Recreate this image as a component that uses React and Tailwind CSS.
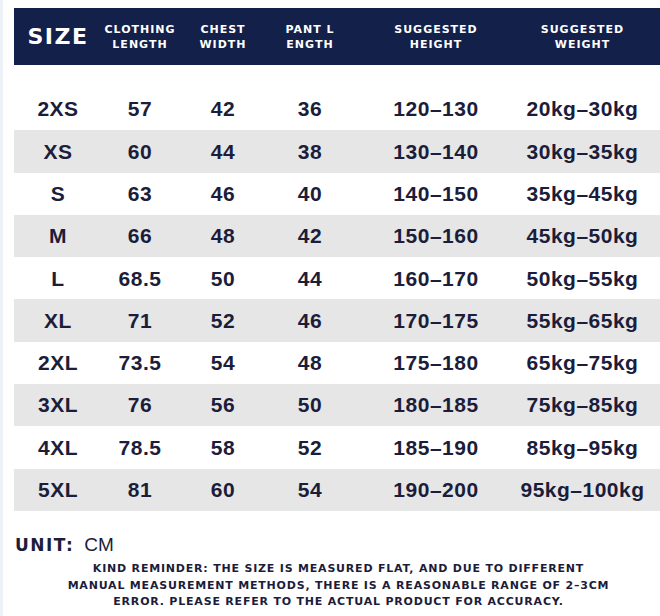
import React from 'react';

const rows = [
  ['2XS', '57', '42', '36', '120–130', '20kg–30kg'],
  ['XS', '60', '44', '38', '130–140', '30kg–35kg'],
  ['S', '63', '46', '40', '140–150', '35kg–45kg'],
  ['M', '66', '48', '42', '150–160', '45kg–50kg'],
  ['L', '68.5', '50', '44', '160–170', '50kg–55kg'],
  ['XL', '71', '52', '46', '170–175', '55kg–65kg'],
  ['2XL', '73.5', '54', '48', '175–180', '65kg–75kg'],
  ['3XL', '76', '56', '50', '180–185', '75kg–85kg'],
  ['4XL', '78.5', '58', '52', '185–190', '85kg–95kg'],
  ['5XL', '81', '60', '54', '190–200', '95kg–100kg'],
];

const headers = [
  ['CLOTHING', 'LENGTH'],
  ['CHEST', 'WIDTH'],
  ['PANT L', 'ENGTH'],
  ['SUGGESTED', 'HEIGHT'],
  ['SUGGESTED', 'WEIGHT'],
];

const cols = 'grid grid-cols-[88px_76px_90px_84px_168px_125px]';

export default function App() {
  return (
    <div className="w-[660px] h-[616px] bg-white border-l-[3px] border-[#edf2f9] overflow-hidden text-[#1b1d3a] font-['Liberation_Sans',Arial,sans-serif]">
      {/* header */}
      <div className={`${cols} mt-[8px] ml-[11px] h-[57px] bg-[#13204a] text-white font-['DejaVu_Sans',sans-serif] font-bold`}>
        <div className="flex items-center justify-center text-[22px] tracking-[1.5px]">SIZE</div>
        {headers.map((h, i) => (
          <div
            key={i}
            className="flex flex-col items-center justify-center text-[11px] leading-[15px] tracking-[1px] whitespace-nowrap"
          >
            <span>{h[0]}</span>
            <span>{h[1]}</span>
          </div>
        ))}
      </div>

      {/* rows */}
      <div className="mt-[23px] ml-[11px]">
        {rows.map((r, i) => (
          <div key={r[0]} className={`${cols} h-[42.3px] ${i % 2 === 1 ? 'bg-[#e6e6e6]' : ''}`}>
            {r.map((c, j) => (
              <div
                key={j}
                className="flex items-center justify-center text-[21px] font-bold tracking-[0.5px] whitespace-nowrap"
              >
                {c}
              </div>
            ))}
          </div>
        ))}
      </div>

      {/* unit */}
      <div className="mt-[20px] ml-[12px] flex items-baseline">
        <span className="text-[17px] font-bold tracking-[1.5px] font-['DejaVu_Sans',sans-serif]">UNIT:</span>
        <span className="ml-[10px] text-[19px] font-medium">CM</span>
      </div>

      {/* reminder */}
      <div className="mt-[2px] pl-[14px] text-center text-[11px] font-bold leading-[16.5px] tracking-[0.8px] font-['DejaVu_Sans',sans-serif]">
        <p>KIND REMINDER: THE SIZE IS MEASURED FLAT, AND DUE TO DIFFERENT</p>
        <p>MANUAL MEASUREMENT METHODS, THERE IS A REASONABLE RANGE OF 2–3CM</p>
        <p>ERROR. PLEASE REFER TO THE ACTUAL PRODUCT FOR ACCURACY.</p>
      </div>
    </div>
  );
}
